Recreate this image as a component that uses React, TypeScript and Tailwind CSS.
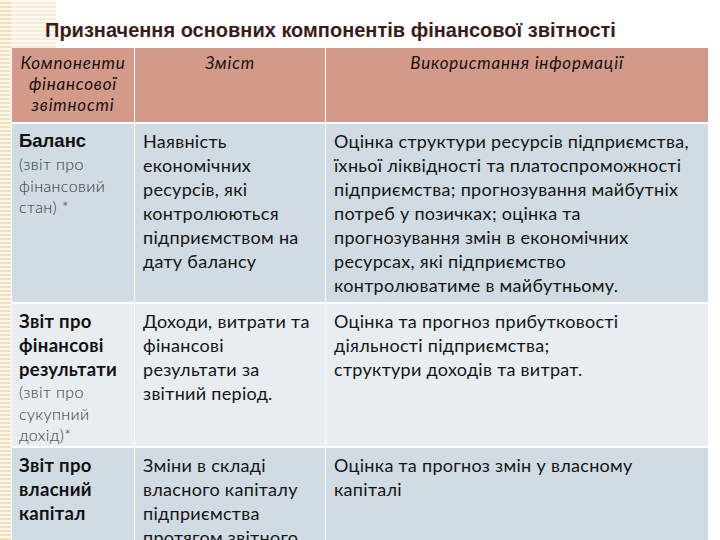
const stripes =
  'bg-[repeating-linear-gradient(0deg,#f1dfbd_0px,#f1dfbd_2px,#fdf8ee_2px,#fdf8ee_4px)]';

type Row = {
  bg: string;
  h: string;
  title: string[];
  note: string[];
  content: string[];
  usage: string[];
};

const rows: Row[] = [
  {
    bg: 'bg-[#d1dbe3]',
    h: 'h-[178px]',
    title: ['Баланс'],
    note: ['(звіт про', 'фінансовий', 'стан) *'],
    content: ['Наявність', 'економічних', 'ресурсів, які', 'контролюються', 'підприємством на', 'дату балансу'],
    usage: [
      'Оцінка структури ресурсів підприємства,',
      'їхньої ліквідності та платоспроможності',
      'підприємства; прогнозування майбутніх',
      'потреб у позичках; оцінка та',
      'прогнозування змін в економічних',
      'ресурсах, які підприємство',
      'контролюватиме в майбутньому.',
    ],
  },
  {
    bg: 'bg-[#e8edf1]',
    h: 'h-[142px]',
    title: ['Звіт про', 'фінансові', 'результати'],
    note: ['(звіт про', 'сукупний', 'дохід)*'],
    content: ['Доходи, витрати та', 'фінансові', 'результати за', 'звітний період.'],
    usage: ['Оцінка та прогноз прибутковості', 'діяльності підприємства;', 'структури доходів та витрат.'],
  },
  {
    bg: 'bg-[#d1dbe3]',
    h: 'h-[120px]',
    title: ['Звіт про', 'власний', 'капітал'],
    note: [],
    content: ['Зміни в складі', 'власного капіталу', 'підприємства', 'протягом звітного'],
    usage: ['Оцінка та прогноз змін у власному', 'капіталі'],
  },
];

function Lines({ items, cls }: { items: string[]; cls: string }) {
  return (
    <>
      {items.map((t) => (
        <div key={t} className={`whitespace-nowrap ${cls}`}>
          {t}
        </div>
      ))}
    </>
  );
}

export default function App() {
  return (
    <div className="relative w-[720px] h-[540px] overflow-hidden bg-white flex font-['Lato',sans-serif]">
      {/* decorative corner */}
      <div className={`absolute left-0 top-0 w-[56px] h-[48px] opacity-60 ${stripes}`} />
      <div className={`w-[11px] shrink-0 ${stripes}`} />

      <div className="relative flex flex-col">
        <h1 className="shrink-0 ml-[34px] pt-[18px] h-[48px] text-[20px] leading-[24px] font-bold text-[#3b1c1c] font-['Liberation_Sans',sans-serif]">
          Призначення основних компонентів фінансової звітності
        </h1>

        <div className="shrink-0 ml-[1px] w-[696px] flex flex-col gap-[2px]">
          <div className="shrink-0 flex gap-[1px] h-[74px]">
            {[
              { w: 'w-[122px]', lines: ['Компоненти', 'фінансової', 'звітності'] },
              { w: 'w-[190px]', lines: ['Зміст'] },
              { w: 'w-[382px]', lines: ['Використання інформації'] },
            ].map((c) => (
              <div key={c.lines[0]} className={`${c.w} bg-[#d39a89] pt-[4px] text-center italic text-[17px] tracking-[0.8px] leading-[21px] text-[#1a1010]`}>
                <Lines items={c.lines} cls="" />
              </div>
            ))}
          </div>

          {rows.map((r) => (
            <div key={r.title[0]} className={`shrink-0 flex gap-[1px] ${r.h}`}>
              <div className={`w-[122px] ${r.bg} pl-[7px] pt-[5px]`}>
                <Lines
                  items={r.title}
                  cls={`text-[18.5px] leading-[24px] font-bold text-[#111] ${r.title[0] === 'Баланс' ? "font-['Liberation_Sans',sans-serif]" : 'tracking-[0.3px]'}`}
                />
                <Lines items={r.note} cls="text-[16px] tracking-[0.4px] leading-[21.5px] text-[#333] font-light" />
              </div>
              <div className={`w-[190px] ${r.bg} pl-[8px] pt-[5px]`}>
                <Lines items={r.content} cls="text-[18px] tracking-[0.3px] leading-[24px] text-[#151515]" />
              </div>
              <div className={`w-[382px] ${r.bg} pl-[8px] pt-[5px]`}>
                <Lines items={r.usage} cls="text-[18px] tracking-[0.3px] leading-[24px] text-[#151515]" />
              </div>
            </div>
          ))}
        </div>
      </div>
    </div>
  );
}
